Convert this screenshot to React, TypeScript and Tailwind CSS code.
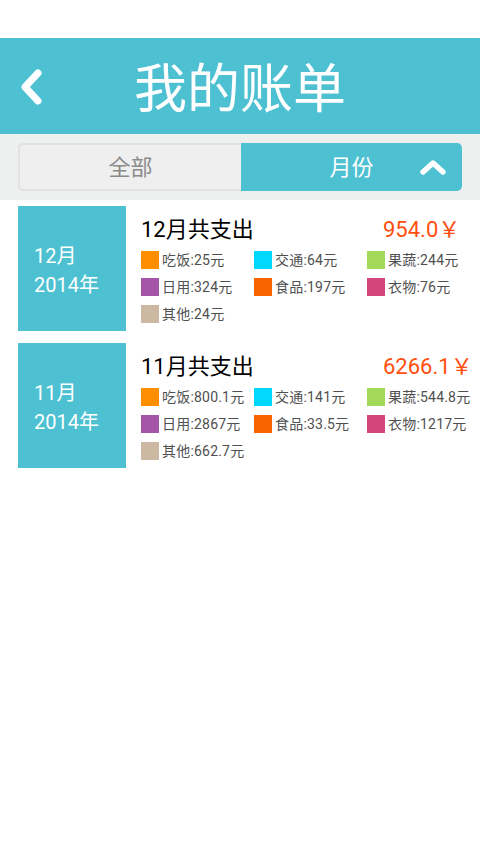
const legendColors: Record<string, string> = {
  吃饭: "bg-[#ff8f00]",
  交通: "bg-[#00d8ff]",
  果蔬: "bg-[#a2d958]",
  日用: "bg-[#a555a8]",
  食品: "bg-[#fa6400]",
  衣物: "bg-[#d4457d]",
  其他: "bg-[#cdb8a4]",
};

const bills = [
  {
    month: "12月",
    year: "2014年",
    title: "12月共支出",
    total: "954.0",
    items: [
      ["吃饭", "25"],
      ["交通", "64"],
      ["果蔬", "244"],
      ["日用", "324"],
      ["食品", "197"],
      ["衣物", "76"],
      ["其他", "24"],
    ],
  },
  {
    month: "11月",
    year: "2014年",
    title: "11月共支出",
    total: "6266.1",
    items: [
      ["吃饭", "800.1"],
      ["交通", "141"],
      ["果蔬", "544.8"],
      ["日用", "2867"],
      ["食品", "33.5"],
      ["衣物", "1217"],
      ["其他", "662.7"],
    ],
  },
];

function BillCard({ bill }: { bill: (typeof bills)[number] }) {
  return (
    <div className="flex h-[125px]">
      <div className="w-[108px] shrink-0 bg-[#4dc1d2] flex flex-col justify-center pl-4 pt-1 text-white text-[20px] leading-[29px]">
        <span>{bill.month}</span>
        <span>{bill.year}</span>
      </div>
      <div className="flex-1 pl-[15px]">
        <div className="flex items-center h-[45px] pt-[1px]">
          <span className="w-[242px] shrink-0 text-[22px] text-black">{bill.title}</span>
          <span className="text-[22px] text-[#ff4f0f] whitespace-nowrap">{bill.total}￥</span>
        </div>
        <div className="grid grid-cols-[113px_113px_113px] gap-y-[9px]">
          {bill.items.map(([name, value]) => (
            <div key={name} className="flex items-center h-[18px] whitespace-nowrap">
              <span className={`w-[18px] h-[18px] shrink-0 ${legendColors[name]}`} />
              <span className="ml-[3px] text-[14px] tracking-[0.2px] text-[#505050]">
                {name}:{value}元
              </span>
            </div>
          ))}
        </div>
      </div>
    </div>
  );
}

export default function App() {
  return (
    <div className="w-[480px] h-[854px] bg-white overflow-hidden" style={{ fontFamily: 'Roboto, "Noto Sans CJK SC", sans-serif' }}>
      <div className="h-[38px] bg-white" />
      <div className="h-[96px] bg-[#4dc1d2] flex items-center relative">
        <svg className="absolute left-[19px] top-[31px]" width="24" height="36" viewBox="0 0 24 36">
          <path d="M19 4 L6 18 L19 32" fill="none" stroke="white" strokeWidth="7" strokeLinecap="round" strokeLinejoin="round" />
        </svg>
        <span className="w-full text-center text-white text-[53px] leading-none pt-[8px]">我的账单</span>
      </div>
      <div className="h-[66px] bg-[#eeefef] px-[18px] pt-[9px]">
        <div className="flex h-[48px]">
          <div className="flex-1 flex items-center justify-center rounded-l-[5px] border-2 border-r-0 border-[#e2e2e2] bg-[#efefef] text-[22px] text-[#8a8a8a]">
            全部
          </div>
          <div className="flex-1 relative flex items-center justify-center rounded-r-[5px] bg-[#4dc1d2] text-[22px] text-white">
            月份
            <svg className="absolute right-[15px] top-[15px]" width="28" height="18" viewBox="0 0 28 18">
              <path d="M4 14 L14 5 L24 14" fill="none" stroke="white" strokeWidth="5.5" strokeLinecap="round" strokeLinejoin="round" />
            </svg>
          </div>
        </div>
      </div>
      <div className="px-[18px] pt-[6px] flex flex-col gap-[12px]">
        {bills.map((bill) => (
          <BillCard key={bill.month} bill={bill} />
        ))}
      </div>
    </div>
  );
}
